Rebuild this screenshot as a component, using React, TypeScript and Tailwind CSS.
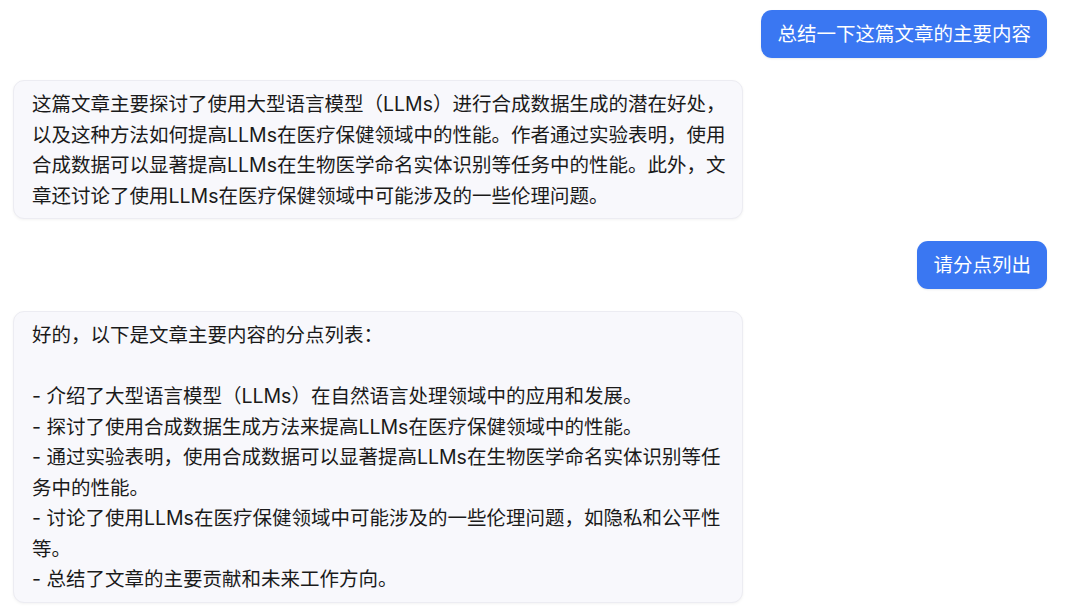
import React from 'react';

type Message = {
  role: 'user' | 'assistant';
  lines: string[];
};

const messages: Message[] = [
  { role: 'user', lines: ['总结一下这篇文章的主要内容'] },
  {
    role: 'assistant',
    lines: [
      '这篇文章主要探讨了使用大型语言模型（LLMs）进行合成数据生成的潜在好处，',
      '以及这种方法如何提高LLMs在医疗保健领域中的性能。作者通过实验表明，使用',
      '合成数据可以显著提高LLMs在生物医学命名实体识别等任务中的性能。此外，文',
      '章还讨论了使用LLMs在医疗保健领域中可能涉及的一些伦理问题。',
    ],
  },
  { role: 'user', lines: ['请分点列出'] },
  {
    role: 'assistant',
    lines: [
      '好的，以下是文章主要内容的分点列表：',
      '',
      '- 介绍了大型语言模型（LLMs）在自然语言处理领域中的应用和发展。',
      '- 探讨了使用合成数据生成方法来提高LLMs在医疗保健领域中的性能。',
      '- 通过实验表明，使用合成数据可以显著提高LLMs在生物医学命名实体识别等任',
      '务中的性能。',
      '- 讨论了使用LLMs在医疗保健领域中可能涉及的一些伦理问题，如隐私和公平性',
      '等。',
      '- 总结了文章的主要贡献和未来工作方向。',
    ],
  },
];

const font = "font-['Inter','Noto_Sans_CJK_SC',sans-serif]";

export default function App() {
  return (
    <div className={`w-[1080px] h-[616px] bg-white overflow-hidden ${font}`}>
      <div className="flex flex-col gap-[22px] pl-[13px] pr-[33px] pt-[10px]">
        {messages.map((msg, i) =>
          msg.role === 'user' ? (
            <div key={i} className="flex justify-end">
              <div className="bg-[#3a77f2] text-white text-[19.5px] leading-[30px] px-4 py-[9px] rounded-[11px] shadow-[0_1px_2px_rgba(0,0,0,0.08)]">
                {msg.lines[0]}
              </div>
            </div>
          ) : (
            <div key={i} className="flex justify-start">
              <div className="w-[730px] bg-[#f8f8fc] border border-[#ececf2] rounded-[11px] shadow-[0_1px_3px_rgba(0,0,0,0.05)] pl-[18px] pr-4 pt-[8px] pb-[7px] text-[#1a1a1a] text-[19.5px] leading-[30.5px]">
                {msg.lines.map((line, j) => (
                  <div key={j} className="h-[30.5px] whitespace-nowrap">
                    {line}
                  </div>
                ))}
              </div>
            </div>
          )
        )}
      </div>
    </div>
  );
}
